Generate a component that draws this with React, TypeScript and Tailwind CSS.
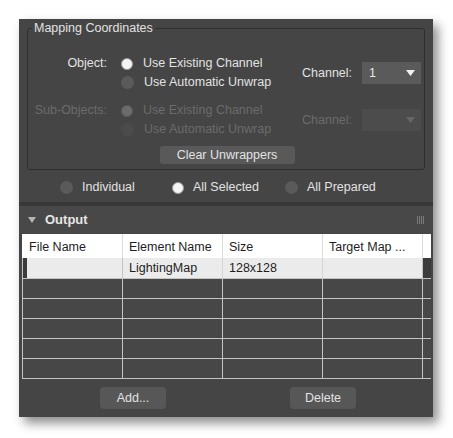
import React from "react";

const font = { fontFamily: '"Liberation Sans", Arial, sans-serif' };

function Radio({ checked, disabled }: { checked?: boolean; disabled?: boolean }) {
  if (checked) {
    return (
      <span
        className={`inline-block h-[12px] w-[12px] shrink-0 rounded-full border ${
          disabled ? "border-[#5a5a5a] bg-[#6c6c6c]" : "border-[#9a9a9a] bg-[#f4f4f4]"
        }`}
      />
    );
  }
  return (
    <span
      className={`inline-block h-[13px] w-[13px] shrink-0 rounded-full ${
        disabled ? "bg-[#4b4b4b]" : "bg-[#5a5a5a]"
      }`}
    />
  );
}

function Option({ label, checked, disabled }: { label: string; checked?: boolean; disabled?: boolean }) {
  return (
    <div className="flex h-[19px] items-center">
      <Radio checked={checked} disabled={disabled} />
      <span className={`ml-[10px] ${disabled ? "text-[#6b6b6b]" : "text-[#e2e2e2]"}`}>{label}</span>
    </div>
  );
}

function ChannelBlock({ title, disabled }: { title: string; disabled?: boolean }) {
  return (
    <div className="flex items-start">
      <div
        className={`w-[79px] text-right leading-[19px] ${disabled ? "text-[#6b6b6b]" : "text-[#e2e2e2]"}`}
      >
        {title}
      </div>
      <div className="ml-[14px] flex w-[181px] flex-col">
        <Option label="Use Existing Channel" checked disabled={disabled} />
        <Option label="Use Automatic Unwrap" disabled={disabled} />
      </div>
      <div className="flex items-center self-center">
        <span className={`w-[60px] ${disabled ? "text-[#6b6b6b]" : "text-[#e2e2e2]"}`}>Channel:</span>
        <div
          className={`flex h-[22px] w-[59px] items-center justify-between pl-[7px] pr-[6px] ${
            disabled ? "bg-[#4c4c4c]" : "bg-[#5a5a5a]"
          }`}
        >
          <span className="text-[#e6e6e6]">{disabled ? "" : "1"}</span>
          <svg width="9" height="6" viewBox="0 0 9 6">
            <path d="M0 0 H9 L4.5 6 Z" fill={disabled ? "#666" : "#f2f2f2"} />
          </svg>
        </div>
      </div>
    </div>
  );
}

const cols = ["File Name", "Element Name", "Size", "Target Map ..."];

export default function App() {
  return (
    <div className="h-[438px] w-[453px] bg-white pl-[19px] pt-[19px] text-[12.5px]" style={font}>
      <div className="flex h-[398px] w-[414px] flex-col bg-[#454545] shadow-[5px_6px_10px_rgba(0,0,0,0.45)]">
        {/* Mapping Coordinates group */}
        <fieldset className="mx-2 mt-[1px] rounded-[3px] border border-[#2e2e2e] px-0 pb-[5px] pt-[18px]">
          <legend className="ml-[4px] px-[2px] leading-[16px] text-[#e2e2e2]">Mapping Coordinates</legend>
          <ChannelBlock title="Object:" />
          <div className="mt-[9px]">
            <ChannelBlock title="Sub-Objects:" disabled />
          </div>
          <div className="mt-[7px] flex justify-center">
            <button className="ml-[2px] h-[18px] w-[135px] rounded-[3px] bg-[#595959] text-[#e2e2e2] leading-[18px]">
              Clear Unwrappers
            </button>
          </div>
        </fieldset>

        {/* scope radios */}
        <div className="mt-[8px] grid h-[19px] grid-cols-[112px_113px_113px] pl-[41px]">
          <div className="flex items-center">
            <Radio />
            <span className="ml-[9px] text-[#e2e2e2]">Individual</span>
          </div>
          <div className="flex items-center">
            <Radio checked />
            <span className="ml-[9px] text-[#e2e2e2]">All Selected</span>
          </div>
          <div className="flex items-center">
            <Radio />
            <span className="ml-[9px] text-[#e2e2e2]">All Prepared</span>
          </div>
        </div>

        <div className="mt-[5px] h-[4px] bg-[#383838]" />

        {/* Output rollout header */}
        <div className="flex h-[27px] items-center bg-[#484848] pl-[9px] pr-[9px]">
          <svg width="8" height="6" viewBox="0 0 8 6">
            <path d="M0 0 H8 L4 6 Z" fill="#b5b5b5" />
          </svg>
          <span className="ml-[9px] text-[13px] font-bold text-[#e6e6e6]">Output</span>
          <div className="ml-auto flex gap-[1px]">
            <span className="h-[8px] w-[1px] bg-[#7a7a7a]" />
            <span className="h-[8px] w-[1px] bg-[#7a7a7a]" />
            <span className="h-[8px] w-[1px] bg-[#7a7a7a]" />
            <span className="h-[8px] w-[1px] bg-[#7a7a7a]" />
          </div>
        </div>

        {/* table */}
        <div className="ml-[3px] mt-[1px] w-[409px]">
          <div className="flex h-[24px] bg-white text-[#1e1e1e]">
            <div className="w-[1px]" />
            {cols.map((c) => (
              <div key={c} className="flex w-[100px] items-center border-r border-[#dcdcdc] pl-[6px] pt-[2px]">
                {c}
              </div>
            ))}
            <div className="flex-1" />
          </div>
          <div className="flex h-[21px] border-b border-l border-[#c4c4c4] bg-[#3c3c3c] text-[#1e1e1e]">
            <div className="flex w-[100px] border-r border-[#c4c4c4]">
              <div className="w-[4px]" />
              <div className="flex-1 bg-[#ebebeb]" />
            </div>
            <div className="flex w-[100px] items-center border-r border-[#d6d6d6] bg-[#ebebeb] pl-[6px] pt-[1px]">
              LightingMap
            </div>
            <div className="flex w-[100px] items-center border-r border-[#d6d6d6] bg-[#ebebeb] pl-[6px] pt-[1px]">
              128x128
            </div>
            <div className="w-[100px] border-r border-[#c4c4c4] bg-[#ebebeb]" />
            <div className="flex-1" />
          </div>
          {[0, 1, 2, 3, 4].map((r) => (
            <div key={r} className="flex h-[20px] border-b border-l border-[#c4c4c4] bg-[#474747]">
              <div className="w-[100px] border-r border-[#c4c4c4]" />
              <div className="w-[100px] border-r border-[#c4c4c4]" />
              <div className="w-[100px] border-r border-[#c4c4c4]" />
              <div className="w-[100px] border-r border-[#c4c4c4]" />
              <div className="flex-1" />
            </div>
          ))}
        </div>

        {/* buttons */}
        <div className="mt-[8px] flex pl-[81px]">
          <button className="h-[22px] w-[66px] rounded-[4px] bg-[#575757] text-[#e2e2e2]">Add...</button>
          <button className="ml-[124px] h-[22px] w-[66px] rounded-[4px] bg-[#575757] text-[#e2e2e2]">
            Delete
          </button>
        </div>
      </div>
    </div>
  );
}
